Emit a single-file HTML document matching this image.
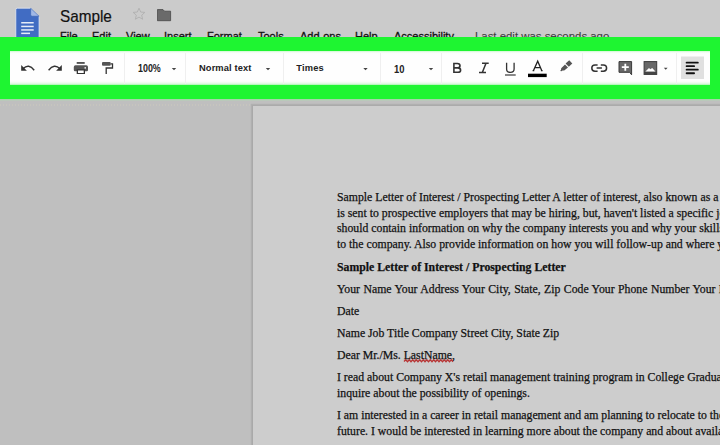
<!DOCTYPE html>
<html><head><meta charset="utf-8">
<style>
html,body{margin:0;padding:0;}
body{width:720px;height:445px;overflow:hidden;position:relative;background:#bfbfbf;font-family:"Liberation Sans",sans-serif;}
.abs{position:absolute;}
#top{left:0;top:0;width:720px;height:37px;background:#cbcbcb;}
#title{left:60px;top:6.2px;font-size:16.2px;color:#111;line-height:20px;white-space:nowrap;transform:scaleX(0.945);transform-origin:0 0;-webkit-text-stroke:0.2px #111;}
.menu{position:absolute;top:29px;font-size:11px;line-height:14px;color:#111;white-space:nowrap;-webkit-text-stroke:0.3px currentColor;}
#green{left:0;top:37px;width:720px;height:62px;background:#1ef531;}
#tb{left:10px;top:51px;width:700px;height:34px;background:linear-gradient(to bottom,#c6f6c9 0px,#eefcef 1px,#fcfefc 2.5px,#fefefe 4px,#fefefe 29px,#f6fdf6 31px,#dff9e1 32.5px,#a8f2ae 34px);}
.sep{position:absolute;top:53px;width:1px;height:31px;background:#efefef;}
.tbt{position:absolute;font-size:9.3px;font-weight:bold;color:#222;line-height:12px;white-space:nowrap;transform-origin:0 0;}
.dd{position:absolute;width:0;height:0;border-left:2px solid transparent;border-right:2px solid transparent;border-top:2px solid #555;}
#page{left:252px;top:105px;width:600px;height:400px;background:#cdcdcd;border-left:1px solid #a9a9a9;border-top:1px solid #ababab;box-shadow:-1px -1px 1px rgba(0,0,0,0.08);}
.tl{position:absolute;left:337px;font-family:"Liberation Serif",serif;font-size:12.3px;color:#111;white-space:nowrap;line-height:16px;transform:scaleX(0.957);transform-origin:0 0;-webkit-text-stroke:0.25px #111;}
</style></head><body>
<div id="top" class="abs"></div>
<!-- doc icon -->
<svg class="abs" style="left:14px;top:6px" width="28" height="32" viewBox="0 0 28 32">
<path d="M3.3 2.2 H16.7 L25.1 10.2 V32 H1.8 V3.7 Q1.8 2.2 3.3 2.2 Z" fill="#416cc3" stroke="#e4e9f2" stroke-width="0.8"/>
<path d="M16.7 2.2 L25.1 10.2 H18.2 Q16.7 10.2 16.7 8.7 Z" fill="#a1b8e6" stroke="#2f58a8" stroke-width="0.5"/>
<rect x="7.2" y="16" width="12.5" height="1.5" fill="#e6ecf8"/>
<rect x="7.2" y="19.7" width="12.5" height="1.5" fill="#e6ecf8"/>
<rect x="7.2" y="23.2" width="12.5" height="1.5" fill="#e6ecf8"/>
<rect x="7.2" y="26.6" width="8.8" height="1.5" fill="#e6ecf8"/>
</svg>
<div id="title" class="abs">Sample</div>
<!-- star -->
<svg class="abs" style="left:131.5px;top:7px" width="14" height="14" viewBox="0 0 24 24">
<path d="M12 2 L14.9 8.6 L22 9.3 L16.6 14 L18.2 21 L12 17.3 L5.8 21 L7.4 14 L2 9.3 L9.1 8.6 Z" fill="none" stroke="#b0b0b0" stroke-width="1.6"/>
</svg>
<!-- folder -->
<svg class="abs" style="left:157px;top:9px" width="15" height="13" viewBox="0 0 15 13">
<path d="M0.4 0.6 H6 L7.6 2.2 H13.6 V11.7 H0.4 Z" fill="#6a6a6a" stroke="#474747" stroke-width="0.8"/>
</svg>
<div class="menu" style="left:60px">File</div>
<div class="menu" style="left:92px">Edit</div>
<div class="menu" style="left:126px">View</div>
<div class="menu" style="left:164px">Insert</div>
<div class="menu" style="left:207px">Format</div>
<div class="menu" style="left:258px">Tools</div>
<div class="menu" style="left:300px">Add-ons</div>
<div class="menu" style="left:355px">Help</div>
<div class="menu" style="left:394px">Accessibility</div>
<div class="menu" style="left:475px;color:#3c3c3c;-webkit-text-stroke:0.1px #3c3c3c;font-size:11.4px">Last edit was seconds ago</div>

<div id="green" class="abs"></div>
<div class="abs" style="left:0;top:99px;width:720px;height:2px;background:linear-gradient(to bottom,#9ed8a2,#c2c4c2)"></div>
<div class="abs" style="left:0;top:104px;width:252px;height:2px;background:repeating-linear-gradient(to right,#c9c7bd 0,#c9c7bd 1.5px,transparent 1.5px,transparent 3px);opacity:0.7"></div>
<div id="tb" class="abs"></div>
<div class="sep" style="left:124px"></div>
<div class="sep" style="left:185px"></div>
<div class="sep" style="left:283px"></div>
<div class="sep" style="left:380px"></div>
<div class="sep" style="left:441px"></div>
<div class="sep" style="left:582px"></div>
<div class="sep" style="left:676px"></div>
<div class="tbt" style="left:138.2px;top:63.3px;font-size:10px;transform:scaleX(0.89)">100%</div>
<div class="tbt" style="left:199px;top:62.1px;letter-spacing:0.12px">Normal text</div>
<div class="tbt" style="left:296.2px;top:62.1px;letter-spacing:0.22px">Times</div>
<div class="tbt" style="left:393.8px;top:63.6px;font-size:10px;transform:scaleX(0.94)">10</div>
<svg class="abs" style="left:0;top:0" width="720" height="445" viewBox="0 0 720 445">
<!-- undo -->
<path d="M21.2 65 V70.7 H26.9 Z" fill="#333"/>
<path d="M23.2 68.6 Q28.7 63.2 34.2 70.2" fill="none" stroke="#333" stroke-width="1.4"/>
<!-- redo -->
<path d="M61.8 65 V70.7 H56.1 Z" fill="#333"/>
<path d="M59.8 68.6 Q54.3 63.2 48.6 70.2" fill="none" stroke="#333" stroke-width="1.4"/>
<!-- print -->
<rect x="76.7" y="62.2" width="8" height="1.5" fill="#2a2a2a"/>
<path d="M75.5 65.3 H86.3 Q88 65.3 88 67 V70 Q88 71.2 86.8 71.2 H75 Q73.8 71.2 73.8 70 V67 Q73.8 65.3 75.5 65.3 Z" fill="#555"/>
<rect x="76.7" y="69.3" width="8.3" height="4.7" fill="#333"/>
<rect x="78" y="70.5" width="5.7" height="2.5" fill="#fff"/>
<circle cx="85.2" cy="67.9" r="0.8" fill="#fff"/>
<!-- paint format -->
<rect x="102" y="62" width="8.7" height="3.7" rx="1" fill="#555"/>
<path d="M110.7 63.8 H112.5 V68 H106.2 V74" fill="none" stroke="#333" stroke-width="1.3"/>
<!-- dropdown arrows -->
<path d="M171.8 67.9 H176.2 L174 70.2 Z" fill="#444"/>
<path d="M265.8 67.9 H270.2 L268 70.2 Z" fill="#444"/>
<path d="M363.3 67.9 H367.7 L365.5 70.2 Z" fill="#444"/>
<path d="M428.8 67.9 H433.2 L431 70.2 Z" fill="#444"/>
<path d="M663.8 67.7 H667.6 L665.7 69.7 Z" fill="#444"/>
<!-- B -->
<path d="M453.9 63.5 H457.4 Q460 63.5 460 65.8 Q460 67.9 457.4 67.9 H453.9 M457.4 67.9 H457.8 Q460.6 67.9 460.6 70.2 Q460.6 72.3 457.8 72.3 H453.9 M453.9 62.7 V73.1" fill="none" stroke="#333" stroke-width="1.6"/>
<!-- I -->
<path d="M482 63.2 H488.7 M479 72.6 H486 M486 63.2 L482.3 72.6" fill="none" stroke="#333" stroke-width="1.5"/>
<!-- U -->
<path d="M506.6 62.7 V69 Q506.6 72.4 510.4 72.4 Q514.1 72.4 514.1 69 V62.7" fill="none" stroke="#333" stroke-width="1.3"/>
<rect x="505" y="74.3" width="10.7" height="1.4" fill="#555"/>
<!-- A -->
<path d="M533.5 70.5 L537.7 61.2 L541.7 70.5 M535 67.6 H540.4 M532.6 70.6 H534.3 M540.9 70.6 H542.6" fill="none" stroke="#222" stroke-width="1.3"/>
<rect x="528" y="73.7" width="18.7" height="3.4" fill="#000"/>
<!-- highlighter -->
<path d="M569.2 60.3 L572.3 63.4 L568.8 66.8 L565.6 63.6 Z" fill="#555"/>
<path d="M565 64.4 L568 67.4 L564.2 70.5 L562.6 70.5 L561.4 71.3 L560.2 71 L561 69.7 L561.2 68.2 Z" fill="#555"/>
<!-- link -->
<path d="M597.6 64.9 H595 A3.2 3.2 0 0 0 595 71.3 H597.6 M600.8 64.9 H603.4 A3.2 3.2 0 0 1 603.4 71.3 H600.8 M596.6 68.1 H601.9" fill="none" stroke="#333" stroke-width="1.5"/>
<!-- comment -->
<path d="M619 61.6 H631.6 V74.8 L629.6 72.3 H619 Z" fill="#686868" stroke="#3a3a3a" stroke-width="1"/>
<path d="M625.3 63.7 V70.7 M621.8 67.2 H628.8" stroke="#fff" stroke-width="1.8"/>
<!-- image -->
<rect x="644.1" y="61.6" width="12.6" height="12.8" fill="#686868" stroke="#3a3a3a" stroke-width="1"/>
<rect x="644.1" y="71.9" width="12.6" height="2.5" fill="#444"/>
<path d="M645.4 71.6 L649 68 L650.3 69.2 L652.2 67.9 L655.4 71.6 Z" fill="#fff"/>
<!-- align -->
<rect x="681" y="56.5" width="23" height="22.5" fill="#e0e0e0"/>
<rect x="685.7" y="61.7" width="13" height="1.9" rx="0.9" fill="#111"/>
<rect x="685.7" y="65.2" width="9.3" height="1.9" rx="0.9" fill="#111"/>
<rect x="685.7" y="68.7" width="13" height="1.9" rx="0.9" fill="#111"/>
<rect x="685.7" y="72.3" width="9.3" height="1.9" rx="0.9" fill="#111"/>
</svg>

<div id="page" class="abs"></div>
<div class="tl" style="top:188.5px">Sample Letter of Interest / Prospecting Letter A letter of interest, also known as a letter of inquiry</div>
<div class="tl" style="top:204.5px">is sent to prospective employers that may be hiring, but, haven't listed a specific job opening.</div>
<div class="tl" style="top:220px">should contain information on why the company interests you and why your skills and experience</div>
<div class="tl" style="top:236px">to the company. Also provide information on how you will follow-up and where you can be contacted.</div>
<div class="tl" style="top:258.5px;font-weight:bold">Sample Letter of Interest / Prospecting Letter</div>
<div class="tl" style="top:280.5px;word-spacing:0.5px">Your Name Your Address Your City, State, Zip Code Your Phone Number Your Email</div>
<div class="tl" style="top:302.5px">Date</div>
<div class="tl" style="top:324.5px">Name Job Title Company Street City, State Zip</div>
<div class="tl" style="top:346.5px">Dear Mr./Ms. LastName,</div>
<div class="tl" style="top:368.5px">I read about Company X's retail management training program in College Graduate magazine.</div>
<div class="tl" style="top:384.5px">inquire about the possibility of openings.</div>
<div class="tl" style="top:406.5px">I am interested in a career in retail management and am planning to relocate to the Anytown area</div>
<div class="tl" style="top:422.5px">future. I would be interested in learning more about the company and about available opportunities.</div>
<svg class="abs" style="left:0;top:0" width="720" height="445"><path d="M404 361.5 L405.75 359.7 L407.50 361.7 L409.25 359.7 L411.00 361.7 L412.75 359.7 L414.50 361.7 L416.25 359.7 L418.00 361.7 L419.75 359.7 L421.50 361.7 L423.25 359.7 L425.00 361.7 L426.75 359.7 L428.50 361.7 L430.25 359.7 L432.00 361.7 L433.75 359.7 L435.50 361.7 L437.25 359.7 L439.00 361.7 L440.75 359.7 L442.50 361.7 L444.25 359.7 L446.00 361.7 L447.75 359.7 L449.50 361.7 L451.25 359.7 L453.00 361.7" fill="none" stroke="#b83535" stroke-width="1.3"/></svg>
</body></html>
